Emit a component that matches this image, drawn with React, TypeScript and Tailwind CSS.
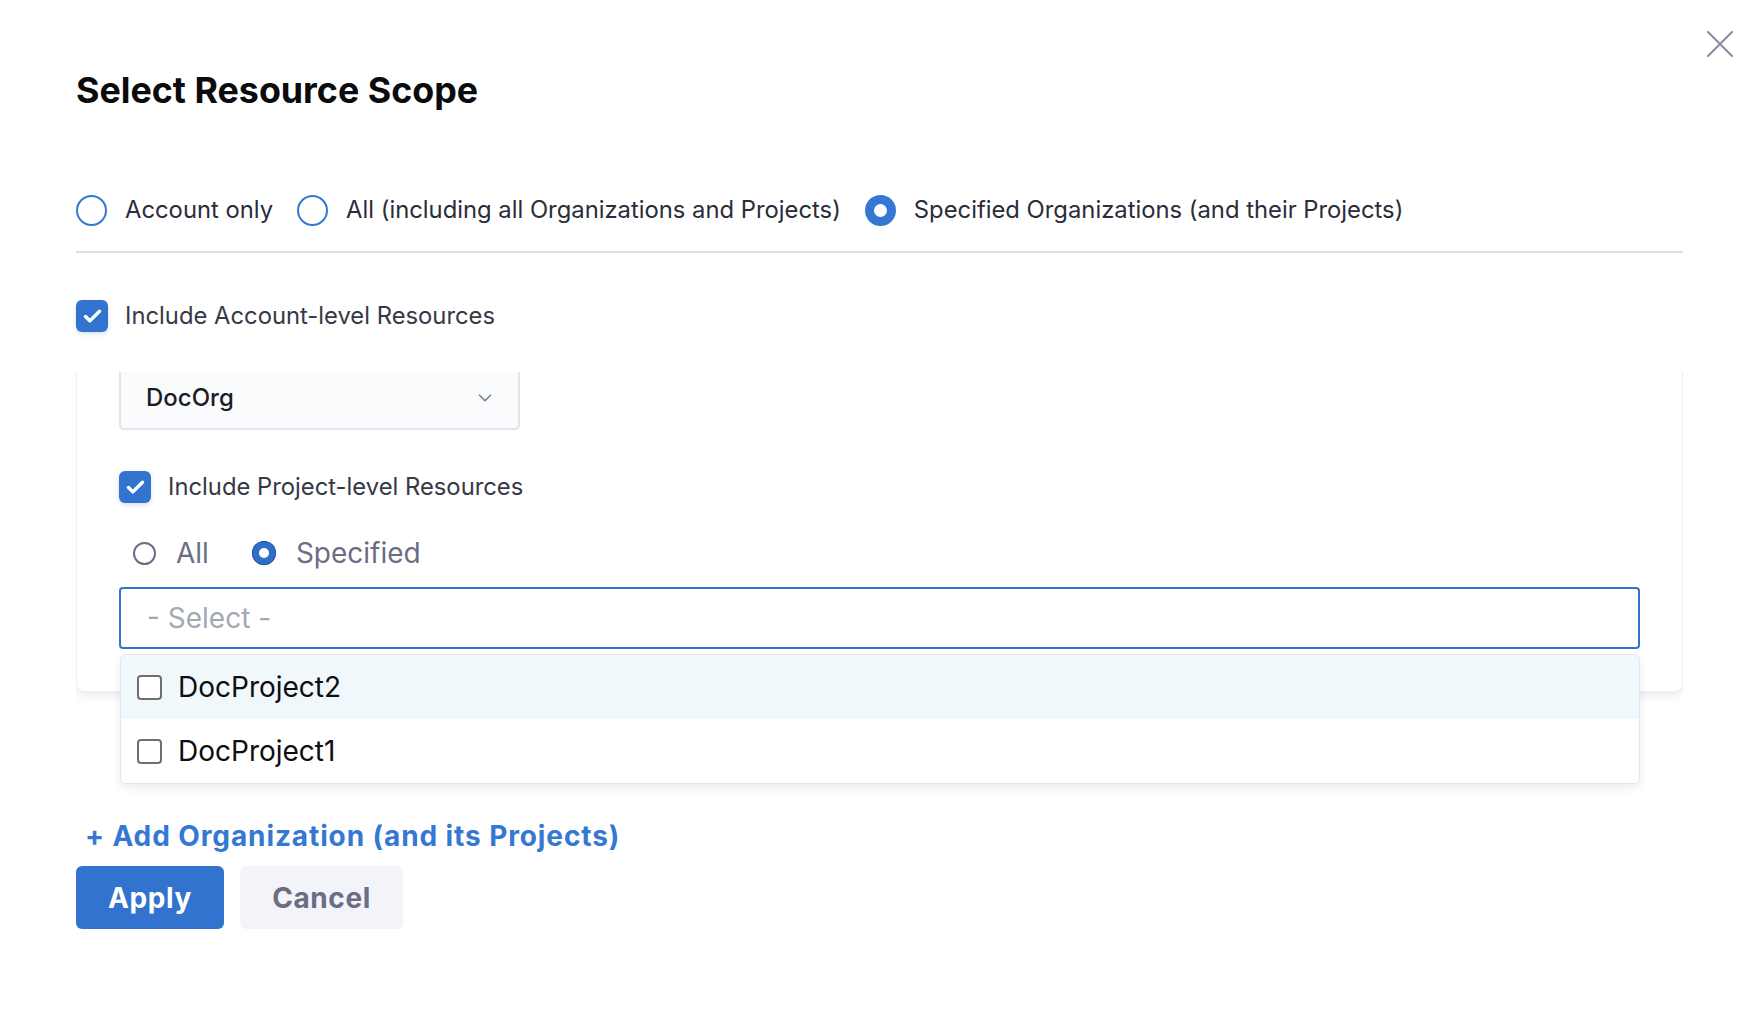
import { Check, ChevronDown } from 'lucide-react';

function Radio({ checked, small }: { checked?: boolean; small?: boolean }) {
    if (small) {
        return checked ? (
            <span className="flex h-[24px] w-[24px] shrink-0 items-center justify-center rounded-full bg-[#2f6fc7] shadow-[inset_0_0_0_1px_#1f5bb0]">
                <span className="h-[10px] w-[10px] rounded-full bg-white" />
            </span>
        ) : (
            <span className="h-[23px] w-[23px] shrink-0 rounded-full border-2 border-[#6b6d85] bg-white" />
        );
    }
    return checked ? (
        <span className="flex h-[31px] w-[31px] shrink-0 items-center justify-center rounded-full bg-[#3478d4]">
            <span className="h-[13px] w-[13px] rounded-full bg-white" />
        </span>
    ) : (
        <span className="h-[31px] w-[31px] shrink-0 rounded-full border-2 border-[#3478d4] bg-white" />
    );
}

function CheckBox() {
    return (
        <span className="flex h-[32px] w-[32px] shrink-0 items-center justify-center rounded-[6px] bg-[#3273cf] shadow-[0_2px_4px_rgba(40,80,160,0.18)]">
            <Check className="h-[21px] w-[21px] text-white" strokeWidth={4} />
        </span>
    );
}

const scopes = [
    { label: 'Account only', checked: false },
    { label: 'All (including all Organizations and Projects)', checked: false },
    { label: 'Specified Organizations (and their Projects)', checked: true },
];

const projects = ['DocProject2', 'DocProject1'];

export default function App() {
    return (
        <div className="relative min-h-screen bg-white font-['Inter','Noto_Sans',sans-serif] text-[#383946]">
            {/* close */}
            <button className="absolute left-[1707px] top-[31px]">
                <svg width="26" height="26" viewBox="0 0 26 26" fill="none" stroke="#8a8ca3" strokeWidth="2" strokeLinecap="round">
                    <path d="M1 1L25 25M25 1L1 25" />
                </svg>
            </button>

            <div className="pl-[76px] pr-[72px] pt-[68px]">
                <h1 className="text-[35.8px] font-bold leading-[44px] text-[#0b0b0d]">Select Resource Scope</h1>

                {/* scope radios */}
                <div className="mt-[82px] flex items-center gap-[24px]">
                    {scopes.map((s) => (
                        <label key={s.label} className="flex items-center gap-[18px]">
                            <Radio checked={s.checked} />
                            <span className="text-[23.8px] leading-[32px] text-[#2c2c3a]">{s.label}</span>
                        </label>
                    ))}
                </div>

                <div className="mt-[25px] h-[2px] bg-[#dcdde6]" />

                <div className="mt-[47px] flex items-center gap-[17px]">
                    <CheckBox />
                    <span className="text-[23.8px] leading-[32px]">Include Account-level Resources</span>
                </div>

                {/* scrolled org list */}
                <div className="mt-[40px] overflow-hidden pb-[20px]">
                    <div className="-mt-[31px] rounded-[8px] border border-[#ededf2] bg-white px-[42px] pb-[42px] pt-[24px] shadow-[0_4px_10px_rgba(30,30,60,0.08)]">
                        <div className="flex h-[64px] w-[401px] items-center justify-between rounded-[5px] border-2 border-[#e3e4ec] bg-[#fafbfd] pl-[25px] pr-[22px]">
                            <span className="text-[24px] font-medium text-[#1c1c28]">DocOrg</span>
                            <ChevronDown className="h-[22px] w-[22px] text-[#7d7f96]" strokeWidth={1.8} />
                        </div>

                        <div className="mt-[41px] flex items-center gap-[17px]">
                            <CheckBox />
                            <span className="text-[23.8px] leading-[32px]">Include Project-level Resources</span>
                        </div>

                        <div className="mt-[32px] flex h-[36px] items-center pl-[14px]">
                            <label className="flex items-center gap-[20px]">
                                <Radio small />
                                <span className="text-[28px] text-[#6b6d85]">All</span>
                            </label>
                            <label className="ml-[43px] flex items-center gap-[20px]">
                                <Radio small checked />
                                <span className="text-[28px] text-[#6b6d85]">Specified</span>
                            </label>
                        </div>

                        <div className="mt-[16px] flex h-[62px] items-center rounded-[4px] border-2 border-[#3273cf] bg-white pl-[26px]">
                            <span className="text-[28px] text-[#a3a9b4]">- Select -</span>
                        </div>
                    </div>
                </div>
            </div>

            {/* project menu */}
            <div className="absolute left-[120px] top-[654px] w-[1520px] overflow-hidden rounded-[6px] border border-[#e4e4ea] bg-white shadow-[0_4px_10px_rgba(30,30,60,0.08)]">
                {projects.map((p, i) => (
                    <div
                        key={p}
                        className={`flex h-[64px] items-center gap-[16px] pl-[16px] ${i === 0 ? 'bg-[#f0f8fc]' : 'bg-white'}`}
                    >
                        <span className="h-[25px] w-[25px] rounded-[4px] border-2 border-[#6f6f73] bg-white" />
                        <span className="text-[28px] text-[#0d0d12]">{p}</span>
                    </div>
                ))}
            </div>

            <div className="pl-[76px]">
                <div className="mt-[106px] pl-[9px]">
                    <span className="text-[28px] font-bold leading-[36px] tracking-[0.9px] text-[#3478d4]">
                        + Add Organization (and its Projects)
                    </span>
                </div>
                <div className="mt-[12px] flex gap-[16px]">
                    <button className="h-[63px] w-[148px] rounded-[6px] bg-[#3273cf] text-[28px] font-bold tracking-[0.6px] text-white">
                        Apply
                    </button>
                    <button className="h-[63px] w-[163px] rounded-[6px] bg-[#f3f3fa] text-[28px] font-bold tracking-[0.6px] text-[#6b6d85]">
                        Cancel
                    </button>
                </div>
            </div>
        </div>
    );
}
